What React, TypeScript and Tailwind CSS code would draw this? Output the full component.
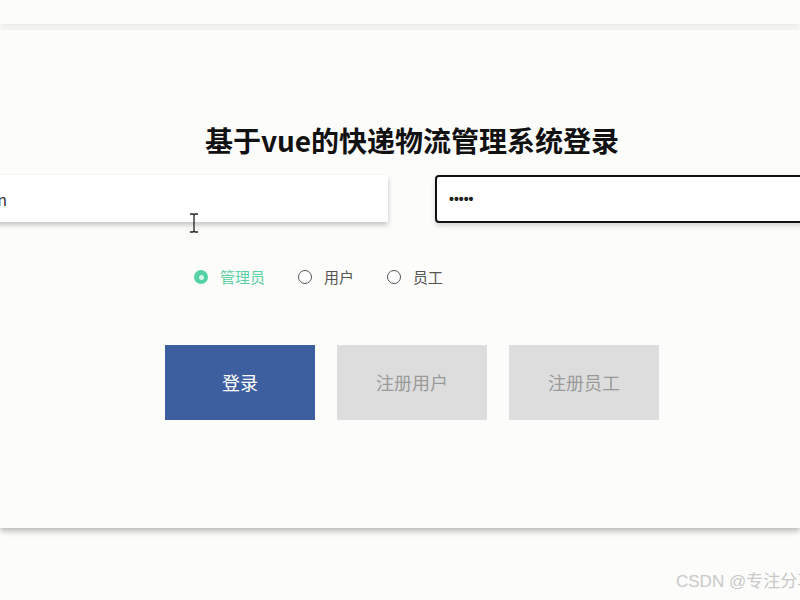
import React, { useState } from "react";

const roles = ["管理员", "用户", "员工"];

const LoginPage: React.FC = () => {
  const [role, setRole] = useState("管理员");

  return (
    <div
      className="relative w-[800px] h-[600px] overflow-hidden bg-[#fcfcfa]"
      style={{ fontFamily: '"Noto Sans CJK SC", "Noto Sans", sans-serif' }}
    >
      {/* header strip */}
      <div className="h-[24px] bg-[#fcfcfa] shadow-[0_3px_4px_rgba(0,0,0,0.07)]" />

      {/* login card */}
      <div className="relative mt-[6px] bg-[#fcfcfa] pt-[93px] pb-[108px] shadow-[0_3px_6px_rgba(0,0,0,0.28)]">
        <h1 className="text-center text-[28px] leading-[35px] font-bold text-[#111] pl-[24px]">
          基于vue的快递物流管理系统登录
        </h1>

        <div className="mt-[17px] flex gap-[47px] ml-[-53px]">
          <div className="w-[441px] h-[47px] shrink-0 bg-white flex items-center pl-[12px] text-[16px] text-[#333] shadow-[0_3px_5px_rgba(0,0,0,0.22)]">
            admin
          </div>
          <div
            className="w-[441px] h-[48px] shrink-0 bg-white flex items-center pl-[12px] border-2 border-[#111] rounded-[4px] text-[14px] font-bold text-[#222] shadow-[0_3px_5px_rgba(0,0,0,0.15)]"
            style={{ fontFamily: '"Liberation Sans", Arial, sans-serif' }}
          >
            •••••
          </div>
        </div>

        <div className="mt-[44px] h-[20px] ml-[194px] flex items-center gap-[33px]">
          {roles.map((r) => {
            const on = r === role;
            return (
              <button
                key={r}
                onClick={() => setRole(r)}
                className="flex items-center gap-[12px] text-[15px]"
              >
                {on ? (
                  <span className="w-[14px] h-[14px] rounded-full bg-[#54d2a5] flex items-center justify-center">
                    <span className="w-[5px] h-[5px] rounded-full bg-[#d8f5ea]" />
                  </span>
                ) : (
                  <span className="w-[14px] h-[14px] rounded-full border border-[#555] bg-white" />
                )}
                <span className={on ? "text-[#5ccfa3]" : "text-[#555]"}>{r}</span>
              </button>
            );
          })}
        </div>

        <div className="mt-[58px] flex gap-[22px] ml-[165px]">
          <button className="w-[150px] h-[75px] bg-[#3e5f9f] text-white text-[18px]">登录</button>
          <button className="w-[150px] h-[75px] bg-[#dddddd] text-[#9a9a9a] text-[18px]">注册用户</button>
          <button className="w-[150px] h-[75px] bg-[#dddddd] text-[#9a9a9a] text-[18px]">注册员工</button>
        </div>

        {/* text cursor */}
        <svg
          className="absolute left-[189px] top-[183px]"
          width="10"
          height="20"
          viewBox="0 0 10 20"
        >
          <path d="M1 1h3l1 1 1-1h3M5 2v16M1 19h3l1-1 1 1h3" stroke="#222" strokeWidth="1.3" fill="none" />
        </svg>
      </div>

      <div
        className="absolute left-[676px] top-[569px] whitespace-nowrap text-[17px] text-[#c9c9c9]"
        style={{ fontFamily: '"Liberation Sans", "Noto Sans CJK SC", sans-serif' }}
      >
        CSDN @专注分享
      </div>
    </div>
  );
};

export default function App() {
  return <LoginPage />;
}
